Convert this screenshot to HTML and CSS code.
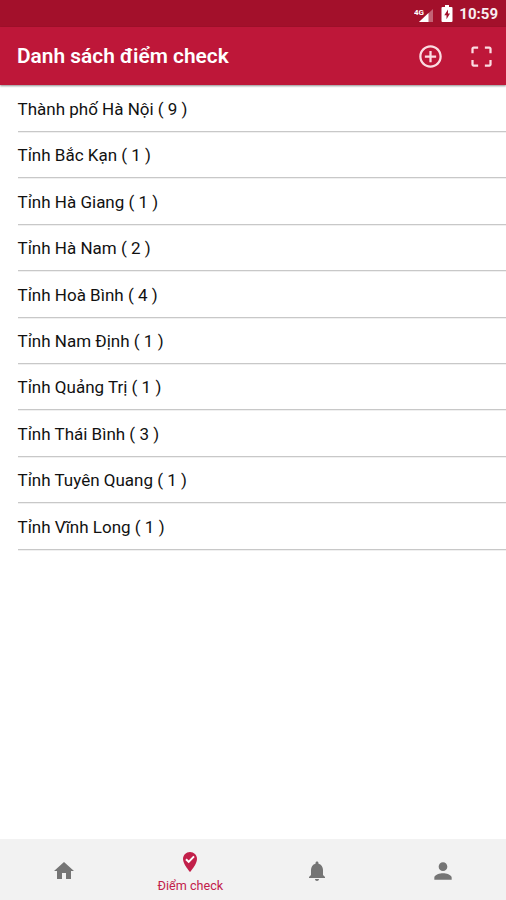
FILE: index.html
```html
<!DOCTYPE html>
<html lang="vi">
<head>
  <meta charset="utf-8">
  <meta name="viewport" content="width=device-width">
  <title>Danh sách điểm check</title>
  <link rel="stylesheet" href="styles.css">
</head>
<body>
  <div class="app">
    <div class="status-bar">
      <svg class="signal" viewBox="0 0 20 18">
        <path d="M19 3v13H5z" fill="#fff" opacity=".35"/>
        <path d="M14.500 7v9H5z" fill="#fff"/>
        <text x="0" y="8.500">4G</text>
      </svg>
      <svg class="battery" viewBox="0 0 12 18">
        <path d="M4 0h4v2h2.500q1 0 1 1v13q0 1-1 1h-9q-1 0-1-1V3q0-1 1-1H4z" fill="#fff"/>
        <path d="M7 4.500L3.300 10.300h2.200v4L9 8.500H7z" fill="#a3102b"/>
      </svg>
      <span class="time">10:59</span>
    </div>

    <header class="header">
      <h1 class="title">Danh sách điểm check</h1>
      <svg class="icon-add" viewBox="0 0 24 24"><path d="M13 7h-2v4H7v2h4v4h2v-4h4v-2h-4V7zm-1-5C6.480 2 2 6.480 2 12s4.480 10 10 10 10-4.480 10-10S17.520 2 12 2zm0 18c-4.410 0-8-3.590-8-8s3.590-8 8-8 8 3.590 8 8-3.590 8-8 8z"/></svg>
      <svg class="icon-scan" viewBox="0 0 24 24"><path d="M3 5v4h2V5h4V3H5c-1.100 0-2 .9-2 2zm2 10H3v4c0 1.100.9 2 2 2h4v-2H5v-4zm14 4h-4v2h4c1.100 0 2-.9 2-2v-4h-2v4zm0-16h-4v2h4v4h2V5c0-1.100-.9-2-2-2z"/></svg>
    </header>

    <ul class="list">
      <li>Thành phố Hà Nội ( 9 )</li>
      <li>Tỉnh Bắc Kạn ( 1 )</li>
      <li>Tỉnh Hà Giang ( 1 )</li>
      <li>Tỉnh Hà Nam ( 2 )</li>
      <li>Tỉnh Hoà Bình ( 4 )</li>
      <li>Tỉnh Nam Định ( 1 )</li>
      <li>Tỉnh Quảng Trị ( 1 )</li>
      <li>Tỉnh Thái Bình ( 3 )</li>
      <li>Tỉnh Tuyên Quang ( 1 )</li>
      <li>Tỉnh Vĩnh Long ( 1 )</li>
    </ul>

    <nav class="tabs">
      <a class="tab">
        <svg viewBox="0 0 24 24"><path d="M10 20v-6h4v6h5v-8h3L12 3 2 12h3v8z"/></svg>
      </a>
      <a class="tab active">
        <svg viewBox="0 0 24 24"><path d="M12 2C8.130 2 5 5.130 5 9c0 5.250 7 13 7 13s7-7.750 7-13c0-3.870-3.130-7-7-7z"/><path class="tick" d="M8 9.200l2.700 2.700 5.300-5.500"/></svg>
        <span>Điểm check</span>
      </a>
      <a class="tab">
        <svg viewBox="0 0 24 24"><path d="M12 22c1.100 0 2-.9 2-2h-4c0 1.100.89 2 2 2zm6-6v-5c0-3.070-1.640-5.640-4.500-6.320V4c0-.83-.67-1.500-1.500-1.500s-1.500.67-1.500 1.500v.68C7.630 5.360 6 7.920 6 11v5l-2 2v1h16v-1l-2-2z"/></svg>
      </a>
      <a class="tab">
        <svg class="person" viewBox="0 0 24 24"><path d="M12 12c2.210 0 4-1.790 4-4s-1.790-4-4-4-4 1.790-4 4 1.790 4 4 4zm0 2c-2.670 0-8 1.340-8 4v2h16v-2c0-2.660-5.330-4-8-4z"/></svg>
      </a>
    </nav>
  </div>
</body>
</html>
```
FILE: styles.css
```css
* {
  box-sizing: border-box;
}

body {
  margin: 0;
  background: #fff;
  font-family: Roboto, "Noto Sans", sans-serif;
}

.app {
  display: flex;
  flex-direction: column;
  height: 100vh;
}

/* status bar */
.status-bar {
  display: flex;
  justify-content: flex-end;
  align-items: center;
  height: 27px;
  padding-right: 8px;
  background: #a3102b;
  color: #fff;
}
.signal {
  width: 20px;
  height: 18px;
  margin-top: 2px;
}
.signal text {
  font-size: 8px;
  font-weight: 700;
  fill: #fff;
}
.battery {
  width: 12px;
  height: 18px;
  margin: 0 6px 0 7px;
}
.time {
  padding-top: 1px;
  font-size: 15px;
  font-weight: 700;
  line-height: 20px;
  opacity: .93;
}

/* header */
.header {
  position: relative;
  display: flex;
  align-items: center;
  height: 58px;
  padding: 0 11px 0 17px;
  background: #be1739;
  box-shadow: 0 1px 2px rgba(0, 0, 0, .45);
  color: #fff;
}
.header svg {
  width: 27px;
  height: 27px;
  fill: #fbdce2;
}
.title {
  flex: 1;
  margin: 0;
  font-size: 20.900px;
  font-weight: 600;
}
.icon-scan {
  margin-left: 24px;
}

/* list */
.list {
  flex: 1;
  margin: 0;
  padding: .6px 0 0 17.5px;
  list-style: none;
}
.list li {
  height: 46.4px;
  padding-top: .4px;
  border-bottom: 1px solid #c8c8c8;
  box-shadow: 0 1px 0 #f0f0f0;
  color: #111;
  font-size: 17px;
  line-height: 47px;
}

/* bottom tabs */
.tabs {
  display: flex;
  height: 61px;
  padding-left: 1px;
  background: #f2f2f2;
}
.tab {
  flex: 1;
  display: flex;
  flex-direction: column;
  align-items: center;
  padding-top: 20px;
  color: #757575;
}
.tab svg {
  width: 24px;
  height: 24px;
  fill: currentColor;
}
.tab .person {
  width: 26px;
  height: 26px;
  margin-top: -1px;
}
.tab.active {
  padding-top: 11px;
  color: #c2204a;
}
.tab.active span {
  font-size: 12.600px;
  line-height: 23px;
}
.tab .tick {
  fill: none;
  stroke: #fff;
  stroke-width: 2;
}
```
